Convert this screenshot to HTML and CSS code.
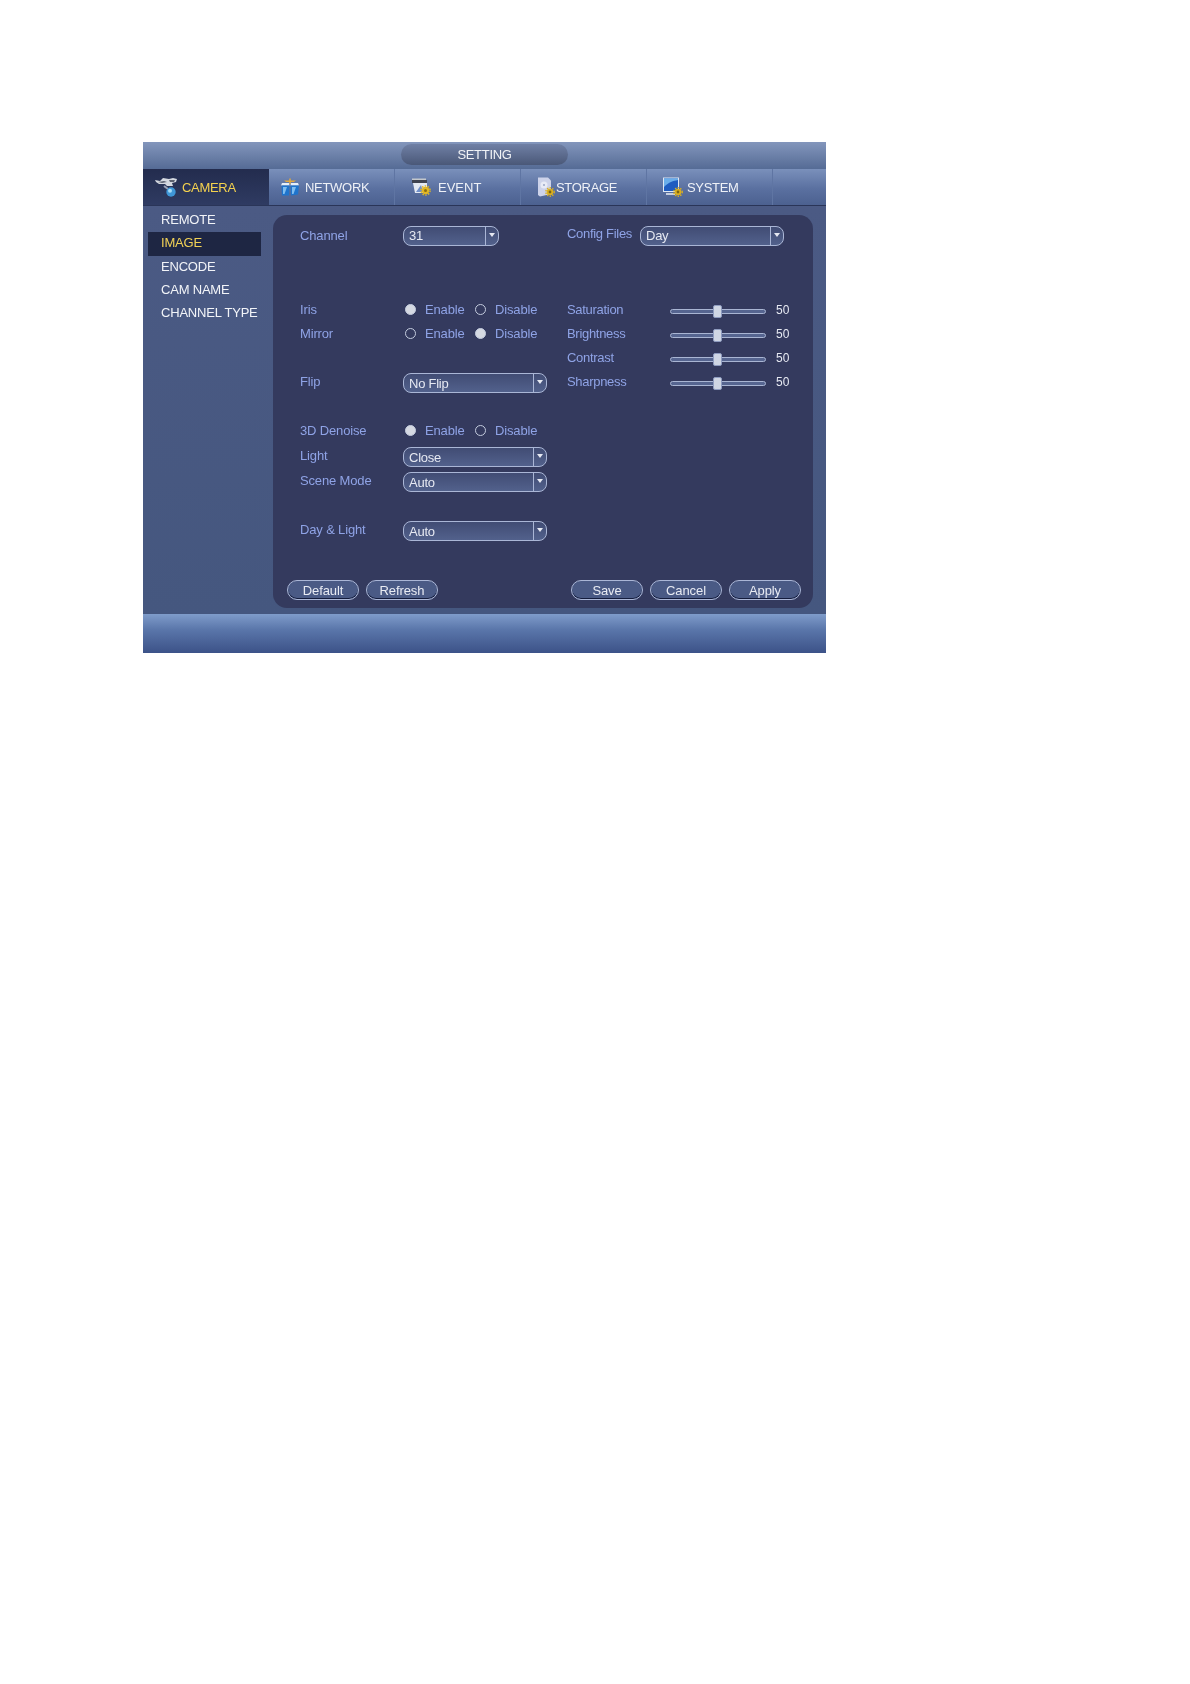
FILE: index.html
```html
<!DOCTYPE html>
<html lang="en">
<head>
  <meta charset="UTF-8" />
  <title>Setting - Camera - Image</title>
  <link rel="stylesheet" href="styles.css">
</head>
<body>
  <div class="window">
    <div class="titlebar"><div class="title-pill">SETTING</div></div>

    <div class="tabs">
      <div class="tab active">
        <svg class="icon icon-camera" viewBox="0 0 24 20">
          <path d="M1 3 L6 4 L9 1 L15 2 L19 1 L23 2 L22 5 L18 6 L19 9 L13 9 L11 7 L5 7 L2 5 Z" fill="#d4d8e0"/>
          <path d="M4 5 L10 4 L13 5 L8 6 Z M15 3 L21 3 L20 5 L16 5 Z" fill="#5a6070"/>
          <path d="M10 9 L14 12" stroke="#9aa3b8" stroke-width="2"/>
          <circle cx="17" cy="15" r="4.700" fill="#3f97d8"/>
          <circle cx="16" cy="13.800" r="2" fill="#a6dcf6"/>
        </svg>
        <span>CAMERA</span>
      </div>
      <div class="tab">
        <svg class="icon icon-network" viewBox="0 0 18 18">
          <path d="M3 2.500 H15 L13 4 H5 Z" fill="#e3a93f"/>
          <path d="M9 0.500 V6" stroke="#e3a93f" stroke-width="1.500"/>
          <path d="M1 5 H8 L8.500 7.500 H0 Z M10 5 H17 L18 7.500 H9.500 Z" fill="#e6eef8"/>
          <path d="M0.500 7.500 H8.500 L8 17.500 H1 Z" fill="#1f74cc"/>
          <path d="M9.500 7.500 H18 L17 16.500 L10 17.500 Z" fill="#1f74cc"/>
          <path d="M2 9 L6 9 L3.500 16 L2 16 Z M11 9 L15 9 L12.500 16 L11 16 Z" fill="#7fbdf0"/>
        </svg>
        <span>NETWORK</span>
      </div>
      <div class="tab tab-event">
        <svg class="icon icon-event" viewBox="0 0 20 18">
          <path d="M1 0.500 H15 V2 H1 Z" fill="#c4c8cc"/>
          <path d="M1 2 H16 V5 H1 Z" fill="#3f4350"/>
          <path d="M2 5 H16 V15 H4 Z" fill="#e4e9f2"/>
          <path d="M5 14 L10 7 L12 14 Z" fill="#6f8fc8"/>
          <circle cx="14.500" cy="12.500" r="3.700" fill="#e3b722"/>
          <circle cx="14.500" cy="12.500" r="4.600" fill="none" stroke="#e3b722" stroke-width="1.400" stroke-dasharray="1.500 1.400"/>
          <circle cx="14.500" cy="12.500" r="1.500" fill="#8a6f14"/>
        </svg>
        <span>EVENT</span>
      </div>
      <div class="tab tab-storage">
        <svg class="icon icon-storage" viewBox="0 0 18 20">
          <path d="M1 0.500 H11 L14 3.500 V17 L3 19.500 L1 18 Z" fill="#cdd3ea"/>
          <circle cx="7" cy="8" r="3.500" fill="#e8ebf6"/>
          <circle cx="7" cy="8" r="1" fill="#9aa6c6"/>
          <circle cx="13" cy="15" r="3.300" fill="#dcb01e"/>
          <circle cx="13" cy="15" r="4.200" fill="none" stroke="#dcb01e" stroke-width="1.400" stroke-dasharray="1.400 1.300"/>
          <circle cx="13" cy="15" r="1.400" fill="#7a6414"/>
        </svg>
        <span>STORAGE</span>
      </div>
      <div class="tab tab-system">
        <svg class="icon icon-system" viewBox="0 0 20 20">
          <path d="M0 0.500 H16 V15 H0 Z" fill="#dfe8f4"/>
          <path d="M1 1.500 H15 V14 H1 Z" fill="#1f5cc0"/>
          <path d="M1 10 C6 5 10 4 15 3 V1.500 H1 Z" fill="#6aaeea"/>
          <path d="M3 16 H12 V18 H3 Z" fill="#c6cede"/>
          <circle cx="15" cy="15" r="3.300" fill="#dcb01e"/>
          <circle cx="15" cy="15" r="4.200" fill="none" stroke="#dcb01e" stroke-width="1.400" stroke-dasharray="1.400 1.300"/>
          <circle cx="15" cy="15" r="1.400" fill="#7a6414"/>
        </svg>
        <span>SYSTEM</span>
      </div>
    </div>

    <div class="main">
      <ul class="sidebar">
        <li>REMOTE</li>
        <li class="selected">IMAGE</li>
        <li>ENCODE</li>
        <li>CAM NAME</li>
        <li>CHANNEL TYPE</li>
      </ul>

      <div class="panel">
        <div class="form">
          <div class="col-left">
            <div class="row row-top">
              <span class="label">Channel</span>
              <div class="select select-short"><span>31</span><i class="arrow"></i></div>
            </div>
            <div class="row gap-50">
              <span class="label">Iris</span>
              <span class="radio on"></span><span class="opt">Enable</span>
              <span class="radio"></span><span class="opt">Disable</span>
            </div>
            <div class="row">
              <span class="label">Mirror</span>
              <span class="radio"></span><span class="opt">Enable</span>
              <span class="radio on"></span><span class="opt">Disable</span>
            </div>
            <div class="row gap-26">
              <span class="label up">Flip</span>
              <div class="select"><span>No Flip</span><i class="arrow"></i></div>
            </div>
            <div class="row gap-23">
              <span class="label">3D Denoise</span>
              <span class="radio on"></span><span class="opt">Enable</span>
              <span class="radio"></span><span class="opt">Disable</span>
            </div>
            <div class="row gap-3">
              <span class="label up">Light</span>
              <div class="select"><span>Close</span><i class="arrow"></i></div>
            </div>
            <div class="row gap-1">
              <span class="label up">Scene Mode</span>
              <div class="select"><span>Auto</span><i class="arrow"></i></div>
            </div>
            <div class="row gap-25">
              <span class="label up">Day &amp; Light</span>
              <div class="select"><span>Auto</span><i class="arrow"></i></div>
            </div>
          </div>

          <div class="col-right">
            <div class="row row-top">
              <span class="label label-right up">Config Files</span>
              <div class="select select-wide"><span>Day</span><i class="arrow"></i></div>
            </div>
            <div class="row gap-50">
              <span class="label label-right">Saturation</span>
              <div class="slider"><i class="thumb"></i></div><span class="value">50</span>
            </div>
            <div class="row">
              <span class="label label-right">Brightness</span>
              <div class="slider"><i class="thumb"></i></div><span class="value">50</span>
            </div>
            <div class="row">
              <span class="label label-right">Contrast</span>
              <div class="slider"><i class="thumb"></i></div><span class="value">50</span>
            </div>
            <div class="row">
              <span class="label label-right">Sharpness</span>
              <div class="slider"><i class="thumb"></i></div><span class="value">50</span>
            </div>
          </div>
        </div>

        <div class="buttons">
          <button class="btn">Default</button>
          <button class="btn">Refresh</button>
          <button class="btn push">Save</button>
          <button class="btn">Cancel</button>
          <button class="btn">Apply</button>
        </div>
      </div>
    </div>

    <div class="footer"></div>
  </div>
</body>
</html>
```

FILE: styles.css
```css
body {
  margin: 0;
  background: #ffffff;
  font-family: "Liberation Sans", Arial, sans-serif;
  font-size: 13px;
  min-height: 1684px;
}
.window {
  margin: 142px 0 0 143px;
  width: 683px;
  height: 511px;
  display: flex;
  flex-direction: column;
  background: #46587f;
  filter: blur(0.4px);
}
.titlebar {
  height: 27px;
  display: flex;
  justify-content: center;
  padding-top: 2px;
  box-sizing: border-box;
  background: linear-gradient(#8396bc, #556b95);
}
.title-pill {
  width: 167px;
  height: 21px;
  border-radius: 11px;
  background: linear-gradient(#7080a5, #4a5878);
  color: #f0f2f6;
  text-align: center;
  line-height: 21px;
  letter-spacing: -0.3px;
}
.tabs {
  height: 36px;
  display: flex;
  background: linear-gradient(#7a90bb, #5a70a0 55%, #4c6190);
  border-bottom: 1px solid #2a3558;
}
.tab {
  width: 126px;
  display: flex;
  align-items: center;
  color: #eef1f7;
  letter-spacing: -0.3px;
  border-right: 1px solid #5f75a3;
  box-sizing: border-box;
  padding-left: 12px;
}
.tab.active {
  color: #f4d24e;
  background: linear-gradient(#232c4e, #2f3b62);
  border-right: none;
  padding-left: 11px;
}
.tab-event { padding-left: 16px; letter-spacing: 0; }
.tab-storage { padding-left: 16px; }
.tab-system { padding-left: 16px; }
.icon { flex: none; display: block; }
.icon-camera { width: 24px; height: 20px; margin-right: 4px; }
.icon-network { width: 18px; height: 18px; margin-right: 6px; }
.icon-event { width: 20px; height: 18px; margin-right: 7px; }
.icon-storage { width: 18px; height: 20px; margin-right: 1px; }
.icon-system { width: 20px; height: 20px; margin-right: 4px; }

.main {
  flex: 1;
  display: flex;
  background: linear-gradient(#4b5a84, #45577f);
}
.sidebar {
  width: 130px;
  margin: 0;
  padding: 3px 0 0 5px;
  list-style: none;
  box-sizing: border-box;
}
.sidebar li {
  height: 23.300px;
  line-height: 21.400px;
  padding-left: 13px;
  width: 113px;
  box-sizing: border-box;
  color: #f2f4f8;
  letter-spacing: -0.2px;
  white-space: nowrap;
}
.sidebar li.selected {
  background: #1e2643;
  color: #f2d256;
}
.panel {
  width: 540px;
  margin: 9px 13px 6px 0;
  padding: 8px 12px 8px 14px;
  box-sizing: border-box;
  border-radius: 14px;
  background: #343a5e;
  display: flex;
  flex-direction: column;
}
.form {
  flex: 1;
  display: flex;
  padding-left: 13px;
}
.col-left { width: 267px; flex: none; }
.row {
  height: 24px;
  display: flex;
  align-items: center;
  white-space: nowrap;
}
.row-top .select { margin-top: 1px; }
.gap-1 { margin-top: 1px; }
.gap-3 { margin-top: 3px; }
.gap-23 { margin-top: 23px; }
.gap-25 { margin-top: 25px; }
.gap-26 { margin-top: 26px; }
.gap-50 { margin-top: 50px; }
.label {
  width: 103px;
  color: #8fa3e6;
  flex: none;
  letter-spacing: -0.15px;
}
.label.up { margin-top: -3px; }
.label-right { width: 73px; letter-spacing: -0.3px; }
.select {
  width: 144px;
  height: 20px;
  border: 1px solid #aab6d6;
  border-radius: 8px;
  box-sizing: border-box;
  background: linear-gradient(#414c74, #52618c);
  color: #e6e9f2;
  display: flex;
  align-items: center;
  padding-left: 5px;
  letter-spacing: -0.25px;
  position: relative;
}
.select-short { width: 96px; }
.select-wide { width: 144px; }
.arrow {
  position: absolute;
  right: 0;
  top: 0;
  bottom: 0;
  width: 12px;
  border-left: 1px solid #aab6d6;
}
.arrow::after {
  content: "";
  position: absolute;
  left: 3px;
  top: 6px;
  border: 3px solid transparent;
  border-top: 4px solid #e6e9f2;
  border-bottom: none;
}
.radio {
  width: 9px;
  height: 9px;
  border: 1px solid #c4ccde;
  border-radius: 50%;
  margin-left: 2px;
  flex: none;
}
.radio.on {
  background: #d5d9e2;
}
.opt {
  color: #8fa3e6;
  margin-left: 9px;
  width: 48px;
  letter-spacing: -0.15px;
}
.slider {
  width: 96px;
  height: 5px;
  margin-left: 30px;
  border: 1px solid #a9b5d3;
  border-radius: 3px;
  box-sizing: border-box;
  background: #566590;
  position: relative;
  top: 2px;
}
.thumb {
  position: absolute;
  left: 42px;
  top: -5px;
  width: 9px;
  height: 13px;
  border-radius: 2px;
  background: #cfd6e4;
  border: 1px solid #8f9cc0;
  box-sizing: border-box;
}
.value {
  margin-left: 10px;
  margin-top: 1px;
  color: #e6e9f2;
  font-size: 12px;
}
.buttons {
  display: flex;
  gap: 7px;
}
.btn {
  width: 72px;
  height: 20px;
  padding: 0;
  font: inherit;
  letter-spacing: -0.1px;
  color: #e8ebf3;
  background: #4a5a85;
  border: 1px solid #aab6d6;
  border-radius: 10px;
  box-shadow: inset 0 -1px 0 #141c3c;
}
.push { margin-left: auto; }
.footer {
  height: 39px;
  background: linear-gradient(#7f9cca, #5a76aa 40%, #3c5288);
}
```
